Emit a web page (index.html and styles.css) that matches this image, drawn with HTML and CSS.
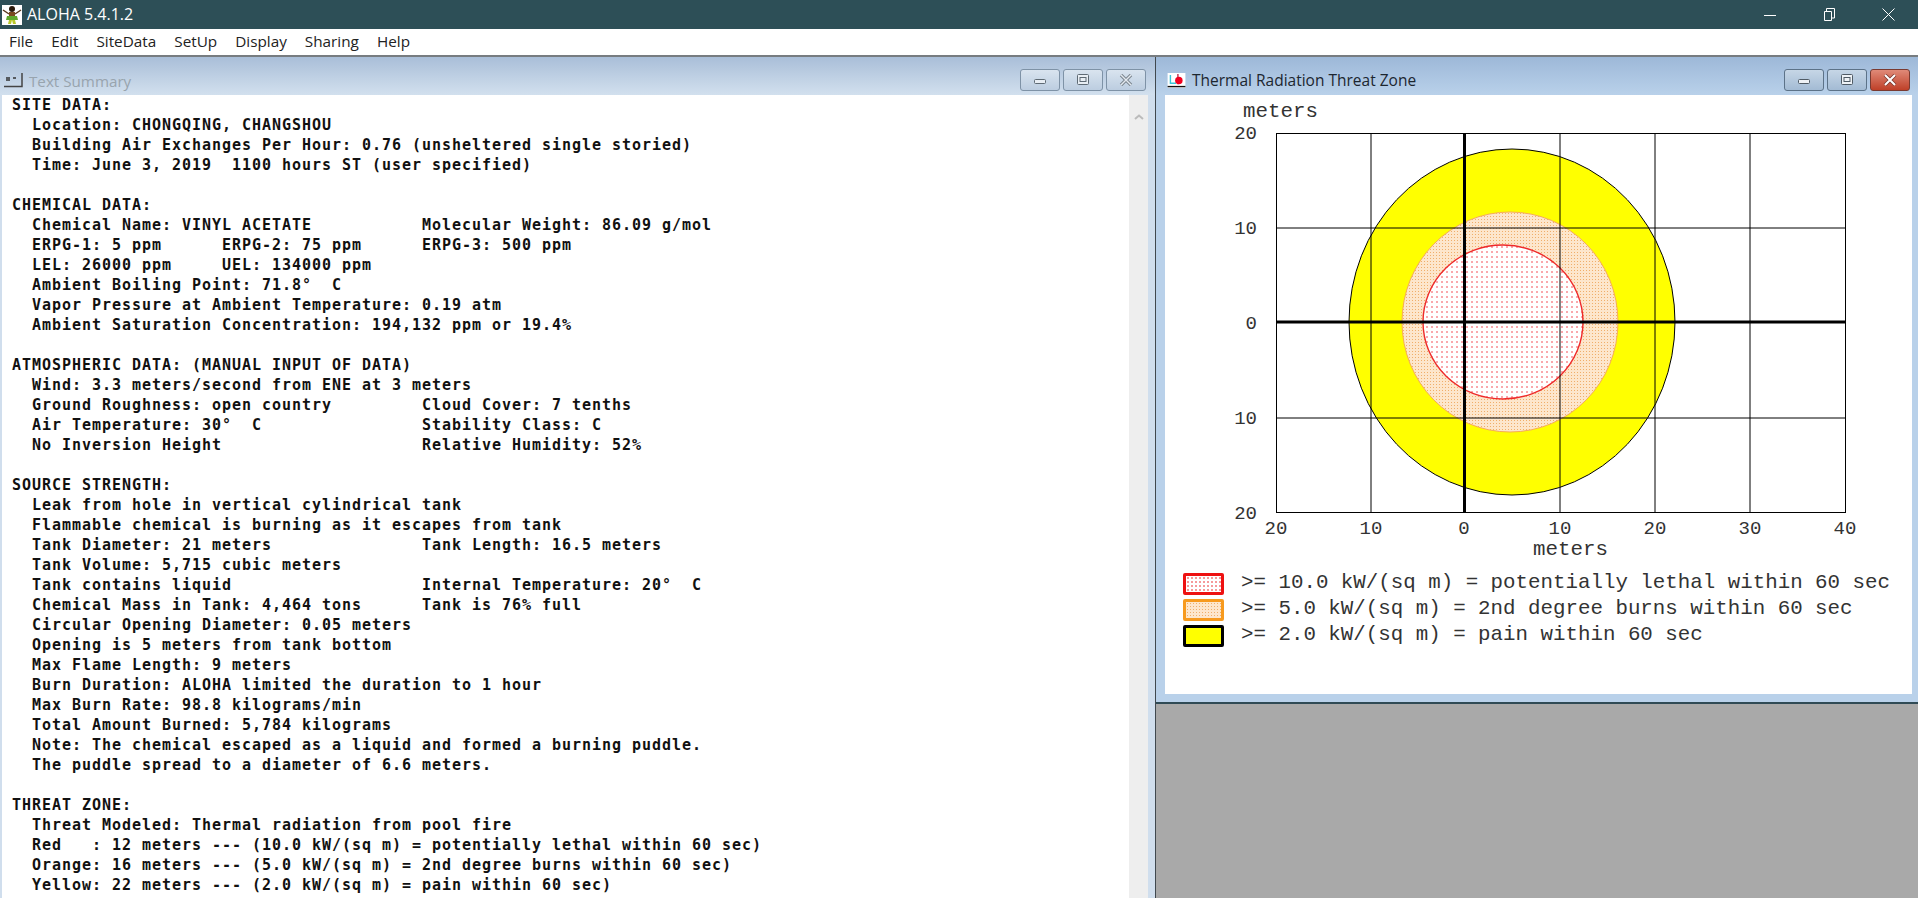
FILE: index.html
```html
<!DOCTYPE html>
<html lang="en">
<head>
    <meta charset="UTF-8">
    <title>ALOHA 5.4.1.2</title>
    <link rel="stylesheet" href="styles.css">
</head>
<body>
    <div class="titlebar">
        <svg class="app-icon" viewBox="0 0 20 20">
            <rect width="20" height="20" fill="#fff"/>
            <path d="M1 5 L7 9 M19 5 L13 9" stroke="#5a3a1c" stroke-width="1.5"/>
            <circle cx="10" cy="4" r="3" fill="#2a1a0c"/>
            <rect x="7" y="7" width="6" height="5" fill="#7a4a20"/>
            <path d="M5 11 H15 L16 15 H4 Z" fill="#5fa82c"/>
            <path d="M7 15 L6 19 H9 L10 15 L11 19 H14 L13 15 Z" fill="#b8c82a"/>
        </svg>
        <span class="app-name">ALOHA 5.4.1.2</span>
        <div class="sys-buttons">
            <svg viewBox="0 0 13 13"><path d="M0 7.5 H12" stroke="#fff" stroke-width="1"/></svg>
            <svg viewBox="0 0 13 13"><path d="M1.5 3.5 H8.5 V12.5 H1.5 Z M3.5 3.5 V0.5 H11.5 V10 H8.5" fill="none" stroke="#fff" stroke-width="1"/></svg>
            <svg viewBox="0 0 13 13"><path d="M0.5 0.5 L12.5 12.5 M12.5 0.5 L0.5 12.5" stroke="#fff" stroke-width="1"/></svg>
        </div>
    </div>
    <div class="menubar">
        <span>File</span>
        <span>Edit</span>
        <span>SiteData</span>
        <span>SetUp</span>
        <span>Display</span>
        <span>Sharing</span>
        <span>Help</span>
    </div>
    <div class="workspace">
        <div class="window text-window">
            <div class="win-title">
                <svg class="win-icon" viewBox="0 0 19 15">
                    <path d="M0 13.5 H18 V0" fill="none" stroke="#444" stroke-width="1.5"/>
                    <path d="M2 5 H6 M2 7 H6 M9 5 H12" stroke="#333" stroke-width="1.5"/>
                </svg>
                <span class="win-name">Text Summary</span>
                <div class="win-buttons">
                    <button class="btn"><svg viewBox="0 0 16 12"><rect x="2.5" y="5.5" width="11" height="4" rx="1" fill="#e8eef4" stroke="#5e6a74"/></svg></button>
                    <button class="btn"><svg viewBox="0 0 16 12"><rect x="2.5" y="0.5" width="11" height="10" rx="1" fill="#e8eef4" stroke="#5e6a74"/><rect x="5" y="3.5" width="6" height="4" fill="none" stroke="#5e6a74"/></svg></button>
                    <button class="btn"><svg viewBox="0 0 16 12"><path d="M3 1 L13 11 M13 1 L3 11" stroke="#7c8790" stroke-width="3.4"/><path d="M3 1 L13 11 M13 1 L3 11" stroke="#e4eaf0" stroke-width="1.4"/></svg></button>
                </div>
            </div>
            <div class="text-client">
<pre class="report">SITE DATA:
  Location: CHONGQING, CHANGSHOU
  Building Air Exchanges Per Hour: 0.76 (unsheltered single storied)
  Time: June 3, 2019  1100 hours ST (user specified)

CHEMICAL DATA:
  Chemical Name: VINYL ACETATE           Molecular Weight: 86.09 g/mol
  ERPG-1: 5 ppm      ERPG-2: 75 ppm      ERPG-3: 500 ppm
  LEL: 26000 ppm     UEL: 134000 ppm
  Ambient Boiling Point: 71.8°  C
  Vapor Pressure at Ambient Temperature: 0.19 atm
  Ambient Saturation Concentration: 194,132 ppm or 19.4%

ATMOSPHERIC DATA: (MANUAL INPUT OF DATA)
  Wind: 3.3 meters/second from ENE at 3 meters
  Ground Roughness: open country         Cloud Cover: 7 tenths
  Air Temperature: 30°  C                Stability Class: C
  No Inversion Height                    Relative Humidity: 52%

SOURCE STRENGTH:
  Leak from hole in vertical cylindrical tank
  Flammable chemical is burning as it escapes from tank
  Tank Diameter: 21 meters               Tank Length: 16.5 meters
  Tank Volume: 5,715 cubic meters
  Tank contains liquid                   Internal Temperature: 20°  C
  Chemical Mass in Tank: 4,464 tons      Tank is 76% full
  Circular Opening Diameter: 0.05 meters
  Opening is 5 meters from tank bottom
  Max Flame Length: 9 meters
  Burn Duration: ALOHA limited the duration to 1 hour
  Max Burn Rate: 98.8 kilograms/min
  Total Amount Burned: 5,784 kilograms
  Note: The chemical escaped as a liquid and formed a burning puddle.
  The puddle spread to a diameter of 6.6 meters.

THREAT ZONE:
  Threat Modeled: Thermal radiation from pool fire
  Red   : 12 meters --- (10.0 kW/(sq m) = potentially lethal within 60 sec)
  Orange: 16 meters --- (5.0 kW/(sq m) = 2nd degree burns within 60 sec)
  Yellow: 22 meters --- (2.0 kW/(sq m) = pain within 60 sec)</pre>
                <div class="scrollbar"><svg viewBox="0 0 10 6"><path d="M1 5 L5 1.5 L9 5" fill="none" stroke="#bbb" stroke-width="2"/></svg></div>
            </div>
        </div>
        <div class="right-pane">
            <div class="window threat-window">
                <div class="win-title">
                    <svg class="win-icon" viewBox="0 0 19 16">
                        <rect width="19" height="16" fill="#fff"/>
                        <path d="M3 2 V11 H9" fill="none" stroke="#39c6d8" stroke-width="1.5"/>
                        <path d="M11 1 V12" stroke="#c03050" stroke-width="1.5"/>
                        <circle cx="12" cy="8" r="4" fill="#f00020"/>
                        <path d="M0 14.5 H19" stroke="#111" stroke-width="1.5"/>
                    </svg>
                    <span class="win-name">Thermal Radiation Threat Zone</span>
                    <div class="win-buttons">
                        <button class="btn"><svg viewBox="0 0 16 12"><rect x="2.5" y="5.5" width="11" height="4" rx="1" fill="#eef2f6" stroke="#4f5a64"/></svg></button>
                        <button class="btn"><svg viewBox="0 0 16 12"><rect x="2.5" y="0.5" width="11" height="10" rx="1" fill="#eef2f6" stroke="#4f5a64"/><rect x="5" y="3.5" width="6" height="4" fill="none" stroke="#4f5a64"/></svg></button>
                        <button class="btn btn-close"><svg viewBox="0 0 16 12"><path d="M3 1 L13 11 M13 1 L3 11" stroke="#7c3a30" stroke-width="3.6"/><path d="M3 1 L13 11 M13 1 L3 11" stroke="#fff" stroke-width="2"/></svg></button>
                    </div>
                </div>
                <div class="threat-client">
                    <svg class="chart" viewBox="0 0 747 450" width="747" height="450">
                        <defs>
                            <pattern id="dotsOrange" width="3" height="3" patternUnits="userSpaceOnUse">
                                <rect width="3" height="3" fill="#fde6cc"/>
                                <rect x="1" y="1" width="1" height="1" fill="#f0ae6a"/>
                            </pattern>
                            <pattern id="dotsRed" width="5" height="5" patternUnits="userSpaceOnUse">
                                <rect width="5" height="5" fill="#fff"/>
                                <rect x="1" y="1" width="2" height="2" fill="#f9a8ac"/>
                            </pattern>
                        </defs>
                        <text class="axis-title" x="78" y="8" dominant-baseline="hanging">meters</text>
                        <g class="axis-text">
                            <text x="92" y="44" text-anchor="end">20</text>
                            <text x="92" y="139" text-anchor="end">10</text>
                            <text x="92" y="234" text-anchor="end">0</text>
                            <text x="92" y="329" text-anchor="end">10</text>
                            <text x="92" y="424" text-anchor="end">20</text>
                            <text x="111" y="439" text-anchor="middle">20</text>
                            <text x="206" y="439" text-anchor="middle">10</text>
                            <text x="299" y="439" text-anchor="middle">0</text>
                            <text x="395" y="439" text-anchor="middle">10</text>
                            <text x="490" y="439" text-anchor="middle">20</text>
                            <text x="585" y="439" text-anchor="middle">30</text>
                            <text x="680" y="439" text-anchor="middle">40</text>
                        </g>
                        <ellipse cx="347" cy="227" rx="163" ry="173" fill="#ffff00" stroke="#000" stroke-width="1"/>
                        <ellipse cx="345" cy="227" rx="108" ry="110" fill="url(#dotsOrange)" stroke="#f6ad55" stroke-width="1"/>
                        <ellipse cx="338" cy="227" rx="80" ry="77" fill="url(#dotsRed)" stroke="#ee2a2a" stroke-width="1.4"/>
                        <g class="grid">
                            <path d="M206 38 V418 M395 38 V418 M490 38 V418 M585 38 V418"/>
                            <path d="M111 133 H681 M111 323 H681"/>
                            <rect x="111.5" y="38.5" width="569" height="379" fill="none"/>
                        </g>
                        <path class="grid-axis" d="M299.5 38 V418 M111 227 H681"/>
                    </svg>
                    <div class="meters-label">meters</div>
                    <div class="legend">
                        <div class="legend-row"><span class="swatch swatch-red"></span><span class="legend-text">&gt;= 10.0 kW/(sq m) = potentially lethal within 60 sec</span></div>
                        <div class="legend-row"><span class="swatch swatch-orange"></span><span class="legend-text">&gt;= 5.0 kW/(sq m) = 2nd degree burns within 60 sec</span></div>
                        <div class="legend-row"><span class="swatch swatch-yellow"></span><span class="legend-text">&gt;= 2.0 kW/(sq m) = pain within 60 sec</span></div>
                    </div>
                </div>
            </div>
            <div class="mdi-empty"></div>
        </div>
    </div>
</body>
</html>
```

FILE: styles.css
```css
html, body {
    margin: 0;
    padding: 0;
    height: 100%;
    overflow: hidden;
}
body {
    display: flex;
    flex-direction: column;
    font-family: "Open Sans", "Noto Sans", sans-serif;
    background-color: #ffffff;
}
.titlebar {
    display: flex;
    align-items: center;
    height: 29px;
    padding-left: 2px;
    background-color: #2d4f57;
    color: #ffffff;
}
.app-icon {
    width: 20px;
    height: 20px;
}
.app-name {
    margin-left: 5px;
    margin-bottom: 1px;
    font-size: 16px;
}
.sys-buttons {
    display: flex;
    align-items: center;
    gap: 46px;
    margin-left: auto;
    padding-right: 23px;
}
.sys-buttons svg {
    width: 13px;
    height: 13px;
}
.menubar {
    display: flex;
    align-items: center;
    gap: 18px;
    height: 24px;
    padding-bottom: 2px;
    padding-left: 9px;
    font-size: 15.3px;
    color: #222222;
    background-color: #ffffff;
}
.workspace {
    display: flex;
    flex: 1;
    min-height: 0;
    border-top: 2px solid #777c80;
}
.window {
    display: flex;
    flex-direction: column;
    box-sizing: border-box;
}
.text-window {
    width: 1156px;
    padding: 0 7px 0 2px;
    background-color: #d0deed;
    border-right: 1px solid #40484e;
}
.win-title {
    display: flex;
    align-items: center;
    flex-shrink: 0;
    box-sizing: border-box;
    height: 38px;
    padding-top: 8px;
    background: linear-gradient(#a9bed8, #d2e0ee);
}
.text-window .win-title {
    margin: 0 -7px 0 -2px;
    padding-right: 9px;
    padding-left: 4px;
}
.win-icon {
    width: 19px;
    height: 15px;
}
.win-name {
    margin-left: 6px;
    margin-top: 1px;
    font-size: 15.2px;
    color: #98a4ae;
}
.win-buttons {
    display: flex;
    gap: 3px;
    margin-left: auto;
}
.btn {
    display: flex;
    align-items: center;
    justify-content: center;
    width: 40px;
    height: 22px;
    padding: 0;
    border: 1px solid #7e92a6;
    border-radius: 3px;
    background: linear-gradient(#d9e4ef, #bccde0);
}
.btn svg {
    width: 16px;
    height: 12px;
}
.text-client {
    display: flex;
    flex: 1;
    min-height: 0;
    background-color: #ffffff;
}
.report {
    flex: 1;
    margin: 0;
    padding-left: 10px;
    font-family: "DejaVu Sans Mono", monospace;
    font-size: 15px;
    font-weight: bold;
    line-height: 20px;
    letter-spacing: 0.97px;
    color: #111111;
    overflow: hidden;
}
.scrollbar {
    width: 19px;
    padding-top: 8px;
    text-align: center;
    background-color: #eeeeee;
}
.scrollbar svg {
    width: 10px;
    height: 6px;
}
.right-pane {
    display: flex;
    flex-direction: column;
    flex: 1;
}
.threat-window {
    height: 647px;
    padding: 0 6px 8px 9px;
    background-color: #b9d1ea;
    border-bottom: 2px solid #2f4a55;
}
.threat-window .win-title {
    margin: 0 -6px 0 -9px;
    padding-right: 8px;
    padding-left: 11px;
    background: linear-gradient(#9db8d8, #b9d1ea);
}
.threat-window .win-name {
    margin-top: 0;
    color: #1c2630;
    font-size: 15.5px;
}
.threat-window .btn {
    border-color: #5c7288;
    background: linear-gradient(#c6d6e6, #a3bbd4);
}
.threat-window .btn-close {
    border-color: #7a3a30;
    background: linear-gradient(#e08a78, #bf4028);
}
.threat-client {
    flex: 1;
    background-color: #ffffff;
}
.chart {
    display: block;
}
.axis-text {
    font-family: "Liberation Mono", monospace;
    font-size: 19px;
    fill: #333333;
}
.axis-title {
    font-family: "Liberation Mono", monospace;
    font-size: 20.8px;
    fill: #333333;
}
.grid {
    fill: none;
    stroke: #000000;
    stroke-width: 1;
}
.grid-axis {
    fill: none;
    stroke: #000000;
    stroke-width: 3;
}
.meters-label {
    margin-top: -6px;
    padding-left: 64px;
    text-align: center;
    font-family: "Liberation Mono", monospace;
    font-size: 20.8px;
    line-height: 22px;
    color: #333333;
}
.legend {
    display: flex;
    flex-direction: column;
    gap: 4px;
    margin-top: 12px;
    padding-left: 18px;
    font-family: "Liberation Mono", monospace;
    font-size: 20.8px;
    color: #333333;
}
.legend-row {
    display: flex;
    align-items: center;
    gap: 17px;
    height: 22px;
    white-space: pre;
}
.legend-text {
    margin-bottom: 4px;
}
.swatch {
    box-sizing: border-box;
    width: 41px;
    height: 22px;
    border: 3px solid #000000;
    border-radius: 2px;
}
.swatch-red {
    border-color: #ee1111;
    background-color: #ffffff;
    background-image: radial-gradient(#f59a9a 40%, transparent 45%);
    background-size: 4px 4px;
}
.swatch-orange {
    border-color: #f79a1e;
    background-color: #fde6cc;
    background-image: radial-gradient(#f0ae6a 35%, transparent 40%);
    background-size: 3px 3px;
}
.swatch-yellow {
    background-color: #ffff00;
}
.mdi-empty {
    flex: 1;
    background-color: #a9a9a9;
}
```
